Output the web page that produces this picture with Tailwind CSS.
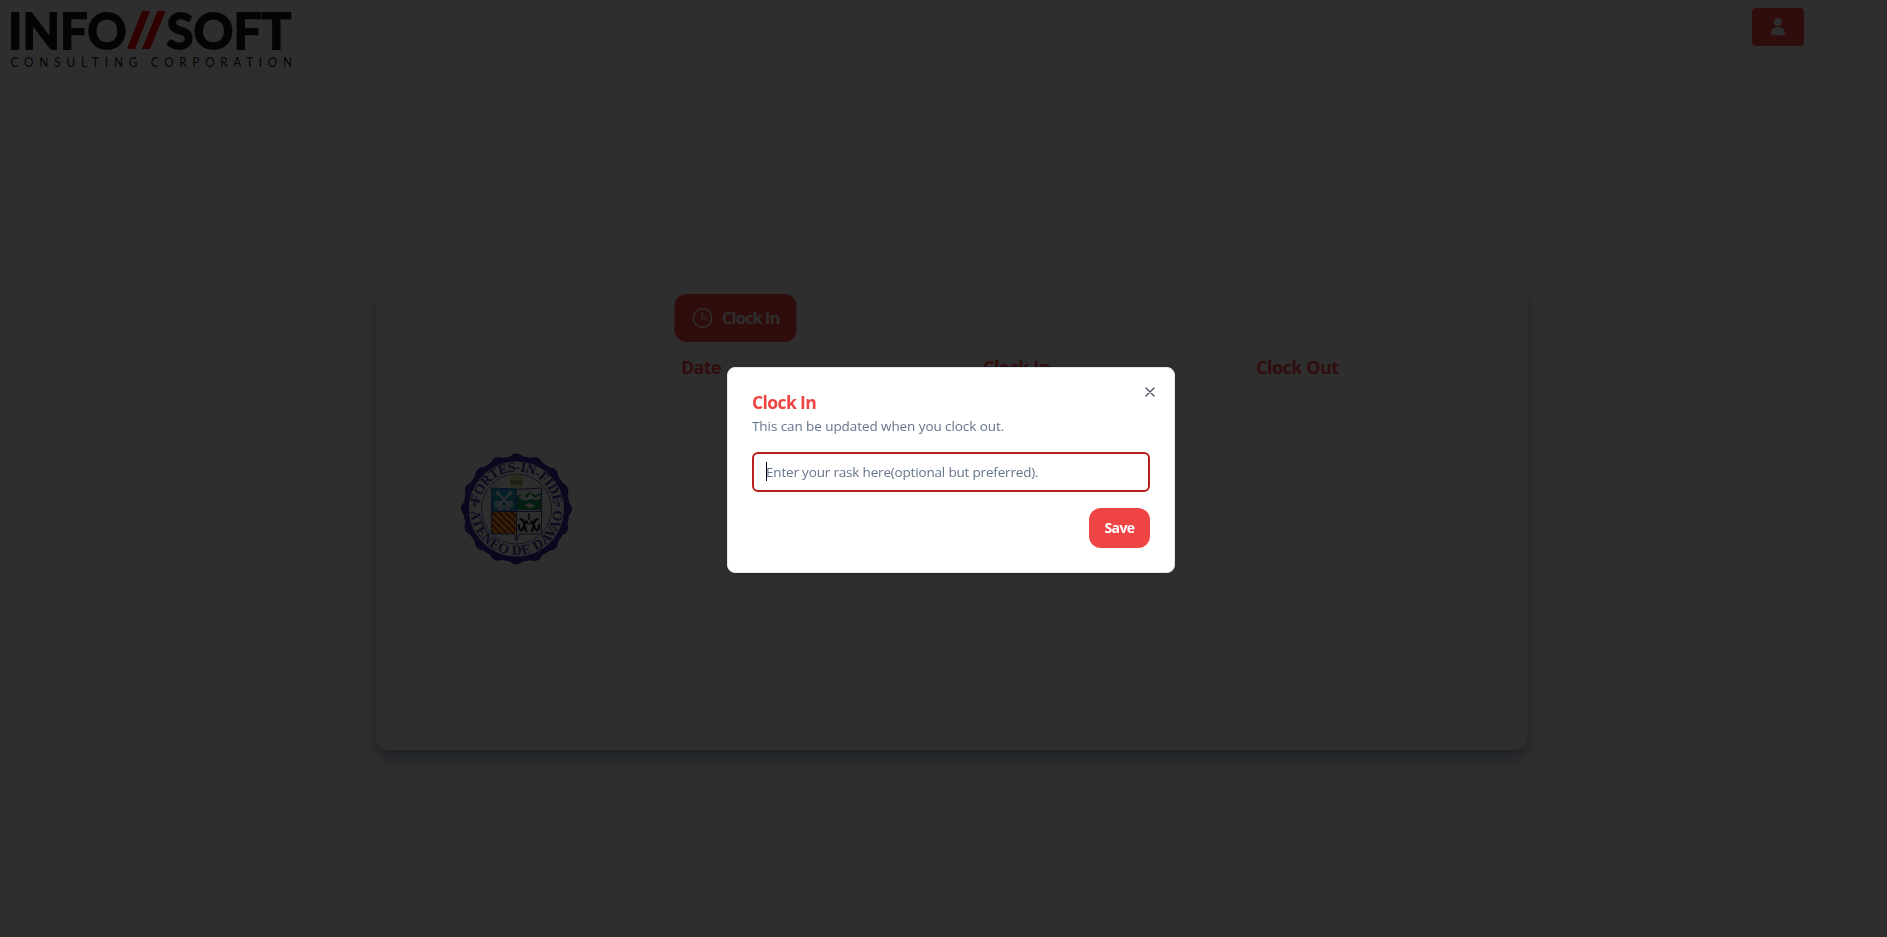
<!DOCTYPE html>
<html lang="en">
<head>
<meta charset="utf-8">
<title>Infosoft Clock In</title>
<script src="https://cdn.jsdelivr.net/npm/@tailwindcss/browser@4"></script>
</head>
<body class="h-screen overflow-hidden bg-[#e3e3e3] font-['Open_Sans','Noto_Sans',sans-serif]">
<header class="flex h-[284px] items-start justify-between pr-[83px]">
  <svg class="h-20 w-[310px] overflow-visible" viewBox="0 0 310 80" font-family="Lato, sans-serif">
    <g font-size="50.500" font-weight="700" fill="#181818" stroke="#181818" stroke-width="1.8">
      <text x="8" y="48.500" textLength="118.500" lengthAdjust="spacingAndGlyphs">INFO</text>
      <text x="166.500" y="48.500" textLength="124.500" lengthAdjust="spacingAndGlyphs">SOFT</text>
    </g>
    <path d="M142 11h8L135 49h-8zM157.500 11h8L150 49h-8z" fill="#f00000"/>
    <g transform="scale(.84 1)" font-size="14" fill="#202020">
      <text x="12.500" y="67" textLength="151" lengthAdjust="spacing">CONSULTING</text>
      <text x="179.500" y="67" textLength="168" lengthAdjust="spacing">CORPORATION</text>
    </g>
  </svg>
  <button class="mt-2 flex h-[38px] w-[52px] items-center justify-center rounded bg-[#ef4444]">
    <svg class="h-[18px] w-[14px]" viewBox="0 0 14 18" fill="#e3e3e3"><circle cx="7" cy="4" r="3.900"/><path d="M0 15.500C0 11.500 3 9 7 9s7 2.500 7 6.500c0 1.300-3 2-7 2s-7-.700-7-2z"/></svg>
  </button>
</header>
<main class="mx-auto flex h-[466px] w-[1152px] translate-x-[7.5px] rounded-xl bg-[#e3e3e3] shadow-lg shadow-[#4b6a94]/50">
  <div class="flex w-[283px] items-center justify-center pb-4">
    <svg class="h-[112px] w-[112px]" viewBox="-56 -56 112 112">
      <defs>
        <path id="top" d="M-37.500 0A37.500 37.500 0 0 1 37.500 0"/>
        <path id="bottom" d="M-46 0A46 46 0 0 0 46 0"/>
        <pattern id="stripes" width="4.600" height="4.600" patternUnits="userSpaceOnUse" patternTransform="rotate(45)"><rect width="4.600" height="4.600" fill="#f0c010"/><rect width="4.600" height="2.300" fill="#c02030"/></pattern>
      </defs>
      <circle r="53" fill="#302a98"/>
      <circle r="47.500" fill="none" stroke="#302a98" stroke-width="16" stroke-linecap="round" stroke-dasharray="0 18.653" transform="rotate(-90)"/>
      <circle r="47.500" fill="#e3e3e3"/>
      <circle r="35" fill="none" stroke="#4a4599" stroke-width=".8"/>
      <g fill="#403a95" font-family="Liberation Serif, serif" font-weight="700" font-size="14">
        <text><textPath href="#top" startOffset="5" textLength="108" lengthAdjust="spacing">FORTES-IN-FIDE</textPath></text>
        <text><textPath href="#bottom" startOffset="2" textLength="140" lengthAdjust="spacing">ATENEO DE DAVAO</textPath></text>
      </g>
      <path d="M-42-7v5M42-7v5" stroke="#403a95" stroke-width="2"/>
      <circle cy="-27.500" r="7" fill="#d8d890"/>
      <text y="-24.500" text-anchor="middle" font-family="Liberation Sans, sans-serif" font-size="7" fill="#333">IHS</text>
      <rect x="-25" y="-21" width="25" height="23" fill="#209bc4"/>
      <rect x="0" y="-21" width="25" height="23" fill="#dedee0"/>
      <path d="M0-12l4-3 4 2 5-4 6 3 6-2V1H0z" fill="#109050"/>
      <path d="M2-11l4-4 4 4 4-5 4 5 6-3v4l-5 1-5-1-5 2-4-2z" fill="#e4e4e4"/><path d="M7-4l6-2 6 3-5 2z" fill="#e4e4e4"/>
      <g stroke="#e3e3e3" stroke-width="1.800" fill="none"><path d="M-20-17L-8-5M-5-17L-17-5M-20-14l3-3M-8-17l3 3"/><circle cx="-19" cy="-5" r="2"/><circle cx="-16" cy="-2" r="2"/><circle cx="-9" cy="-2" r="2"/><circle cx="-6" cy="-5" r="2"/></g>
      <rect x="-25" y="3" width="25" height="22" fill="url(#stripes)"/>
      <g fill="none" stroke="#111" stroke-width="2.200"><path d="M3 10l3 1 2 4-1 4-3 3M7 15l4-3M8 17l2 6M3 21l-1-6M22 10l-3 1-2 4 1 4 3 3M18 15l-4-3M17 17l-2 6M22 21l1-6"/><path d="M12.500 4v7M9 12c0 4 7 4 7 0" stroke-width="1.200"/></g>
      <path d="M-25-21Q0-18 25-21V25H3L0 32l-3-7h-22zM0-19V31M-25 2.500H25" fill="none" stroke="#48449a" stroke-width="1"/>
    </svg>
  </div>
  <div class="ml-4 flex flex-col pt-[10px]">
    <button class="flex h-12 w-[122px] items-center rounded-xl bg-[#ef4444] pl-[18px] text-base font-bold text-[#e3e3e3]">
      <svg class="mr-[10px] h-5 w-5 shrink-0" viewBox="0 0 20 20" fill="none" stroke="currentColor" stroke-width="1.500"><circle cx="10" cy="10" r="9.200"/><path d="M9.500 4v6.500H14"/></svg>
      <span class="tracking-[-0.7px] whitespace-nowrap">Clock In</span>
    </button>
    <div class="mt-[11px] flex pl-[7px] text-lg leading-7 font-bold whitespace-nowrap text-[#ef4444]">
      <span class="w-[302px] tracking-[-0.7px]">Date</span>
      <span class="w-[273px] tracking-[-0.5px]">Clock In</span>
      <span class="tracking-[-0.5px]">Clock Out</span>
    </div>
  </div>
</main>
<div class="fixed inset-0 flex items-start justify-center bg-black/80 pl-[15px]">
  <section role="dialog" class="relative mt-[367px] flex h-[206px] w-[448px] flex-col rounded-lg border border-slate-200 bg-white px-6 pt-6 shadow-lg">
    <h2 class="text-[17.5px] leading-5 font-bold tracking-[-0.6px] text-[#ef4444]">Clock In</h2>
    <p class="mt-1 text-[13.5px] leading-5 tracking-[-0.08px] whitespace-nowrap text-[#64748b]">This can be updated when you clock out.</p>
    <div class="mt-4 flex h-10 shrink-0 items-center rounded-md border-2 border-[#b91c1c] pl-3">
      <span class="-mt-[1px] mr-[-1px] h-[19px] w-px bg-slate-950"></span>
      <span class="text-[13.5px] leading-5 tracking-[-0.18px] whitespace-nowrap text-[#64748b]">Enter your rask here(optional but preferred).</span>
    </div>
    <button class="mt-4 flex h-10 w-[61px] items-center justify-center self-end rounded-xl bg-[#ef4444] text-sm font-bold tracking-[-0.6px] text-white">Save</button>
    <svg class="absolute top-4 right-4 h-4 w-4 text-[#4b5160]" viewBox="0 0 24 24" fill="none" stroke="currentColor" stroke-width="2" stroke-linecap="round" stroke-linejoin="round"><path d="M18 6 6 18M6 6l12 12"/></svg>
  </section>
</div>
</body>
</html>
